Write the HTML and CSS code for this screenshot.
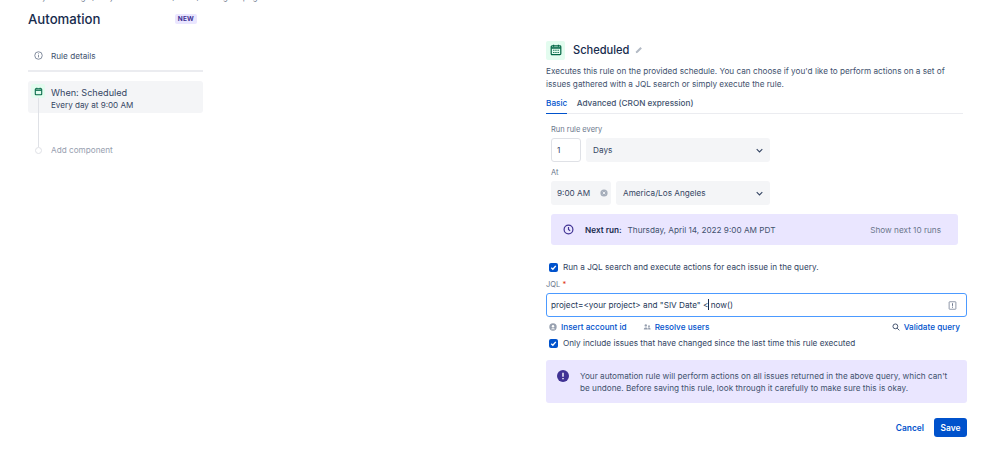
FILE: index.html
```html
<!DOCTYPE html>
<html lang="en">
<head>
    <meta charset="UTF-8">
    <title>Automation</title>
    <link rel="stylesheet" href="styles.css">
</head>
<body>
    <div class="page">
        <!-- Left rail -->
        <aside class="rail">
            <div class="crumbs">Project settings / Project automation / Rule / Configure page</div>
            <div class="rail-head">
                <h1>Automation</h1>
                <span class="lozenge">NEW</span>
            </div>
            <div class="rule-details">
                <svg class="info-icon" viewBox="0 0 12 12" fill="none" stroke="#6b778c" stroke-width="1.1">
                    <circle cx="6" cy="6" r="5"/>
                    <path d="M6 5.4v3.200M6 3.200v1.200"/>
                </svg>
                <span>Rule details</span>
            </div>
            <div class="steps">
                <div class="step-line"></div>
                <div class="step-card">
                    <span class="step-icon">
                        <svg viewBox="0 0 12 12" fill="none" stroke="#006644" stroke-width="1.4">
                            <rect x="1.7" y="2.4" width="8.6" height="7.9" rx="0.8"/>
                            <path d="M2 4.3h8" stroke-width="1.6"/>
                            <path d="M3.8 .9v2M8.2 .9v2" stroke-width="1.1"/>
                        </svg>
                    </span>
                    <div>
                        <div class="step-title">When: Scheduled</div>
                        <div class="step-sub">Every day at 9:00 AM</div>
                    </div>
                </div>
                <div class="step-add">
                    <span class="step-dot"></span>
                    <span>Add component</span>
                </div>
            </div>
        </aside>

        <!-- Scheduled form -->
        <main class="panel">
            <div class="panel-head">
                <span class="panel-icon">
                    <svg viewBox="0 0 14 14" fill="none" stroke="#006644">
                        <rect x="1.4" y="2.3" width="11.2" height="10.2" rx="1" stroke-width="1.4"/>
                        <path d="M1.5 4.6h11" stroke-width="1.8"/>
                        <path d="M4.2 .8v2.4M9.8 .8v2.4" stroke-width="1.3"/>
                        <path d="M3.7 7.3h1.5M6.2 7.3h1.5M8.8 7.3h1.5M3.7 9.8h1.5M6.2 9.8h1.5M8.8 9.8h1.5" stroke-width="1.2"/>
                    </svg>
                </span>
                <h2>Scheduled</h2>
                <svg class="pencil" viewBox="0 0 10 10" fill="#b3bac5">
                    <path d="M1 9l.5-2.3L6.8 1.4l1.8 1.8L3.300 8.500z"/>
                </svg>
            </div>
            <p class="intro">Executes this rule on the provided schedule. You can choose if you'd like to perform actions on a set of issues gathered with a JQL search or simply execute the rule.</p>
            <div class="tabs">
                <span class="tab tab-active">Basic</span>
                <span class="tab">Advanced (CRON expression)</span>
            </div>

            <div class="schedule">
                <div class="field-label label-every">Run rule every</div>
                <div class="field-row">
                    <div class="input input-num">1</div>
                    <div class="select select-days">
                        <span>Days</span>
                        <svg class="chevron" viewBox="0 0 10 6" fill="none" stroke="#344563" stroke-width="1.5"><path d="M1 1l4 4 4-4"/></svg>
                    </div>
                </div>
                <div class="field-label label-at">At</div>
                <div class="field-row">
                    <div class="select select-time">
                        <span>9:00 AM</span>
                        <svg class="clear" viewBox="0 0 10 10">
                            <circle cx="5" cy="5" r="4.500" fill="#a5adba"/>
                            <path d="M3.400 3.400l3.200 3.200M6.600 3.400L3.400 6.600" stroke="#f4f5f7" stroke-width="1.100"/>
                        </svg>
                    </div>
                    <div class="select select-zone">
                        <span>America/Los Angeles</span>
                        <svg class="chevron" viewBox="0 0 10 6" fill="none" stroke="#344563" stroke-width="1.5"><path d="M1 1l4 4 4-4"/></svg>
                    </div>
                </div>
                <div class="next-run">
                    <svg class="clock" viewBox="0 0 12 12" fill="none" stroke="#403294" stroke-width="1.300">
                        <circle cx="6" cy="6" r="4.800"/>
                        <path d="M6 3.300V6l1.800 1.300"/>
                    </svg>
                    <b>Next run:</b>
                    <span class="next-date">Thursday, April 14, 2022 9:00 AM PDT</span>
                    <span class="next-more">Show next 10 runs</span>
                </div>
                <label class="check check-jql">
                    <span class="box"><svg viewBox="0 0 10 10" fill="none" stroke="#fff" stroke-width="1.500"><path d="M2.500 5.200l1.800 1.800 3.200-3.800"/></svg></span>
                    Run a JQL search and execute actions for each issue in the query.
                </label>
            </div>

            <div class="field-label label-jql">JQL <span class="req">*</span></div>
            <div class="jql-input">
                <span>project=&lt;your project&gt; and "SIV Date" &lt;<i class="caret"></i> now()</span>
                <svg class="jql-status" viewBox="0 0 12 12" fill="none" stroke="#6b778c">
                    <rect x="1.500" y="1" width="9" height="10" rx="0.800"/>
                    <path d="M6 3v3.500M6 7.500v1.500" stroke-width="1.300"/>
                </svg>
            </div>
            <div class="jql-links">
                <a class="jql-link">
                    <svg viewBox="0 0 10 10" fill="#97a0af"><circle cx="5" cy="5" r="4.600"/><circle cx="5" cy="4" r="1.500" fill="#fff"/><path d="M2.500 7.800c.8-1.500 4.200-1.500 5 0z" fill="#fff"/></svg>
                    Insert account id
                </a>
                <a class="jql-link link-users">
                    <svg viewBox="0 0 10 10" fill="#97a0af"><circle cx="3.500" cy="3" r="1.500"/><circle cx="7.500" cy="4" r="1.200"/><path d="M1 8c0-3 5-3 5 0zM6.500 8c.2-1 0-1.700-.3-2.200 1.500-.6 3.300.2 3.300 2.200z"/></svg>
                    Resolve users
                </a>
                <a class="jql-link link-validate">
                    <svg viewBox="0 0 10 10" fill="none" stroke="#42526e" stroke-width="1.200"><circle cx="4.200" cy="4.200" r="3"/><path d="M6.400 6.400l2.800 2.800"/></svg>
                    Validate query
                </a>
            </div>
            <label class="check check-only">
                <span class="box"><svg viewBox="0 0 10 10" fill="none" stroke="#fff" stroke-width="1.500"><path d="M2.500 5.200l1.800 1.800 3.200-3.800"/></svg></span>
                Only include issues that have changed since the last time this rule executed
            </label>

            <div class="notice">
                <svg class="notice-icon" viewBox="0 0 12 12">
                    <circle cx="6" cy="6" r="6" fill="#403294"/>
                    <path d="M6 2.800v3.900M6 8v1.200" stroke="#fff" stroke-width="1.400"/>
                </svg>
                <p>Your automation rule will perform actions on all issues returned in the above query, which can't be undone. Before saving this rule, look through it carefully to make sure this is okay.</p>
            </div>

            <div class="actions">
                <button class="btn-link">Cancel</button>
                <button class="btn-save">Save</button>
            </div>
        </main>
    </div>
</body>
</html>
```

FILE: styles.css
```css
* {
    margin: 0;
    padding: 0;
    box-sizing: border-box;
}

html, body {
    height: 453px;
    overflow: hidden;
}

body {
    background: #fff;
    color: #42526e;
    font-family: Inter, "Liberation Sans", sans-serif;
    font-size: 8.2px;
    line-height: 12px;
}

.page {
    display: flex;
    align-items: flex-start;
    padding-left: 28px;
}

/* Left rail */
.rail {
    width: 175px;
    flex-shrink: 0;
    margin-right: 343px;
}

.crumbs {
    margin: -9px 0 0 2px;
    height: 12px;
    width: 240px;
    white-space: nowrap;
    overflow: hidden;
    color: #6b778c;
}

.rail-head {
    display: flex;
    align-items: center;
    justify-content: space-between;
    height: 20px;
    margin-top: 6px;
    padding-right: 6px;
}

.rail-head h1 {
    font-size: 13.200px;
    font-weight: 500;
    line-height: 20px;
    color: #172b4d;
}

.lozenge {
    background: #eae6ff;
    color: #403294;
    font-size: 6.500px;
    font-weight: 700;
    line-height: 10px;
    padding: 0 3px;
    border-radius: 2px;
    letter-spacing: .2px;
}

.rule-details {
    display: flex;
    align-items: center;
    height: 31px;
    margin-top: 12px;
    border-bottom: 2px solid #ebecf0;
    padding-left: 6px;
}

.info-icon {
    width: 9px;
    height: 9px;
    margin-right: 8px;
}

.steps {
    position: relative;
    margin-top: 9px;
}

.step-line {
    position: absolute;
    left: 10px;
    top: 16px;
    width: 1px;
    height: 50px;
    background: #dfe1e6;
}

.step-card {
    display: flex;
    height: 32px;
    background: #f4f5f7;
    border-radius: 3px;
    padding-left: 3px;
    color: #344563;
}

.step-icon {
    position: relative;
    display: flex;
    align-items: center;
    justify-content: center;
    width: 14px;
    height: 14px;
    margin: 3px 6px 0 0;
    background: #e3fcef;
    border-radius: 2px;
}

.step-icon svg {
    width: 9px;
    height: 9px;
}

.step-title {
    margin-top: 5px;
    font-size: 9.150px;
    line-height: 13px;
}

.step-sub {
    font-size: 8.100px;
    line-height: 13px;
}

.step-add {
    position: relative;
    display: flex;
    align-items: center;
    margin-top: 31px;
    height: 12px;
    padding-left: 7px;
    color: #97a0af;
}

.step-dot {
    width: 7px;
    height: 7px;
    margin-right: 9px;
    border: 1px solid #dfe1e6;
    border-radius: 50%;
    background: #fff;
}

/* Form panel */
.panel {
    width: 421px;
    padding-top: 40px;
}

.panel-head {
    display: flex;
    align-items: center;
    height: 20px;
}

.panel-icon {
    display: flex;
    align-items: center;
    justify-content: center;
    width: 19px;
    height: 19px;
    margin-right: 8px;
    background: #e3fcef;
    border-radius: 2px;
}

.panel-icon svg {
    width: 12px;
    height: 12px;
}

.panel-head h2 {
    font-size: 11.100px;
    font-weight: 500;
    color: #172b4d;
}

.pencil {
    width: 8px;
    height: 8px;
    margin-left: 6px;
}

.intro {
    margin-top: 5px;
    line-height: 13px;
    width: 410px;
}

.tabs {
    display: flex;
    gap: 9.500px;
    margin-top: 6px;
    height: 17px;
    width: 417px;
    border-bottom: 1px solid #ebecf0;
}

.tab {
    height: 17px;
    line-height: 13px;
    font-weight: 500;
    color: #42526e;
}

.tab-active {
    color: #0052cc;
    border-bottom: 1px solid #0052cc;
}

.schedule {
    padding-left: 5px;
}

.field-label {
    height: 12px;
    font-size: 7.500px;
    line-height: 12px;
    color: #6b778c;
}

.label-every {
    margin-top: 10px;
}

.field-row {
    display: flex;
    gap: 5px;
    margin-top: 2px;
}

.input, .select {
    display: flex;
    align-items: center;
    height: 24px;
    border-radius: 3px;
    background: #f4f5f7;
    color: #344563;
}

.input-num {
    width: 30px;
    background: #fff;
    border: 1px solid #dfe1e6;
    padding-left: 5px;
}

.select {
    justify-content: space-between;
    padding: 0 7px;
}

.select-days {
    width: 184px;
}

.chevron {
    width: 7px;
    height: 5px;
}

.label-at {
    margin-top: 5px;
}

.select-time {
    width: 60px;
    padding: 0 3px 0 6px;
}

.clear {
    width: 8px;
    height: 8px;
}

.select-zone {
    width: 154px;
}

.next-run {
    display: flex;
    align-items: center;
    width: 407px;
    height: 31px;
    margin-top: 9px;
    background: #eae6ff;
    border-radius: 3px;
    padding: 0 17px 0 12px;
    color: #42526e;
}

.clock {
    width: 11px;
    height: 11px;
    margin-right: 11px;
}

.next-run b {
    font-weight: 600;
    color: #172b4d;
    margin-right: 6px;
}

.next-more {
    margin-left: auto;
    color: #6b778c;
}

.check {
    display: flex;
    align-items: center;
    gap: 5px;
    height: 12px;
    color: #344563;
}

.check-jql {
    margin: 16px 0 0 -2px;
}

.box {
    display: flex;
    width: 9px;
    height: 9px;
    background: #0052cc;
    border-radius: 2px;
}

.label-jql {
    margin-top: 6px;
}

.req {
    color: #de350b;
}

.jql-input {
    display: flex;
    align-items: center;
    justify-content: space-between;
    width: 421px;
    height: 24px;
    margin-top: 2px;
    padding: 0 9px 0 4px;
    border: 1.500px solid #4c9aff;
    border-radius: 3px;
    color: #253858;
}

.caret {
    display: inline-block;
    width: 1px;
    height: 11px;
    margin: 0 -1px 0 0;
    vertical-align: -2px;
    background: #172b4d;
}

.jql-status {
    width: 9px;
    height: 9px;
}

.jql-links {
    display: flex;
    align-items: center;
    height: 13px;
    margin-top: 3px;
    padding: 0 7px 0 3px;
    font-weight: 500;
}

.jql-link {
    display: flex;
    align-items: center;
    gap: 4px;
    color: #0052cc;
}

.jql-link svg {
    width: 8px;
    height: 8px;
}

.link-users {
    margin-left: 16px;
}

.link-validate {
    margin-left: auto;
}

.check-only {
    margin: 4px 0 0 3px;
}

.notice {
    display: flex;
    width: 421px;
    height: 43px;
    margin-top: 11px;
    padding: 10px 16px 0 11px;
    background: #eae6ff;
    border-radius: 3px;
    color: #42526e;
}

.notice-icon {
    width: 12px;
    height: 12px;
    flex-shrink: 0;
    margin-right: 11px;
}

.actions {
    display: flex;
    justify-content: flex-end;
    align-items: center;
    gap: 10px;
    margin-top: 15px;
}

.btn-link, .btn-save {
    font-family: inherit;
    font-size: 8.400px;
    font-weight: 600;
    border: none;
    border-radius: 3px;
    height: 19px;
}

.btn-link {
    background: none;
    color: #0052cc;
}

.btn-save {
    width: 33px;
    background: #0052cc;
    color: #fff;
}
```
